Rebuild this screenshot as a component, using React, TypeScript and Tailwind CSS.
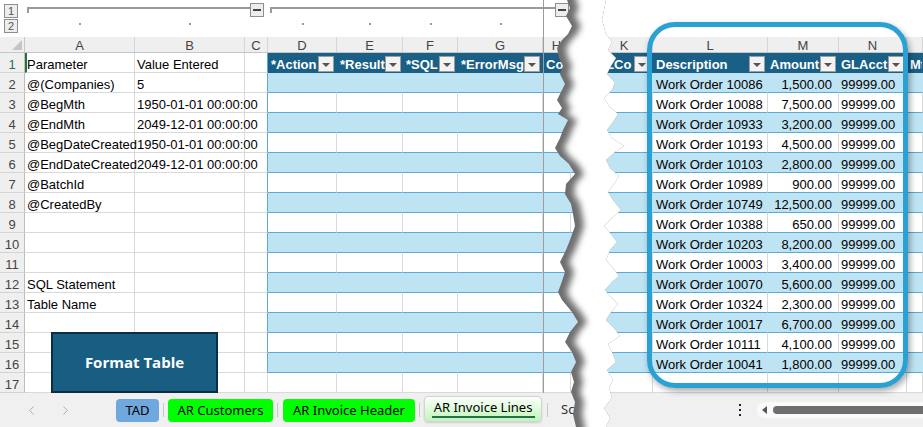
import React from 'react';
import { ChevronLeft, ChevronRight } from 'lucide-react';

const cx = (...c: (string | false | undefined)[]) => c.filter(Boolean).join(' ');

type Col = { key: string; w: string; letter: string; dot?: boolean };

const leftCols: Col[] = [
  { key: 'A', w: 'w-[110px]', letter: 'A', dot: true },
  { key: 'B', w: 'w-[110px]', letter: 'B', dot: true },
  { key: 'C', w: 'w-[23px]', letter: 'C' },
  { key: 'D', w: 'w-[69px]', letter: 'D', dot: true },
  { key: 'E', w: 'w-[66px]', letter: 'E', dot: true },
  { key: 'F', w: 'w-[55px]', letter: 'F', dot: true },
  { key: 'G', w: 'w-[85px]', letter: 'G', dot: true },
  { key: 'H', w: 'w-[28px]', letter: 'H' },
  { key: 'I', w: 'w-[25px]', letter: '' },
];

const rightCols: Col[] = [
  { key: 'K', w: 'w-[57px]', letter: 'K' },
  { key: 'L', w: 'w-[115px]', letter: 'L' },
  { key: 'M', w: 'w-[71px]', letter: 'M' },
  { key: 'N', w: 'w-[68px]', letter: 'N' },
  { key: 'O', w: 'w-[16px]', letter: '' },
];

const params: Record<number, [string, string]> = {
  1: ['Parameter', 'Value Entered'],
  2: ['@(Companies)', '5'],
  3: ['@BegMth', '1950-01-01 00:00:00'],
  4: ['@EndMth', '2049-12-01 00:00:00'],
  5: ['@BegDateCreated', '1950-01-01 00:00:00'],
  6: ['@EndDateCreated', '2049-12-01 00:00:00'],
  7: ['@BatchId', ''],
  8: ['@CreatedBy', ''],
  12: ['SQL Statement', ''],
  13: ['Table Name', ''],
};

const lines: [string, string][] = [
  ['10086', '1,500.00'],
  ['10088', '7,500.00'],
  ['10933', '3,200.00'],
  ['10193', '4,500.00'],
  ['10103', '2,800.00'],
  ['10989', '900.00'],
  ['10749', '12,500.00'],
  ['10388', '650.00'],
  ['10203', '8,200.00'],
  ['10003', '3,400.00'],
  ['10070', '5,600.00'],
  ['10324', '2,300.00'],
  ['10017', '6,700.00'],
  ['10111', '4,100.00'],
  ['10041', '1,800.00'],
];

const rowNums = Array.from({ length: 17 }, (_, i) => i + 1);

function Drop() {
  return (
    <span className="ml-auto mr-[2px] flex h-[16px] w-[16px] shrink-0 items-center justify-center border border-[#9c9c9c] bg-[#f3f3f3]">
      <span className="mt-[1px] h-0 w-0 border-x-[4px] border-t-[4px] border-x-transparent border-t-[#555]" />
    </span>
  );
}

function tableTone(r: number): string {
  if (r === 1) return 'bg-[#1a5f86] border-r-[#1a5f86] border-b-[#1a5f86] text-white font-bold';
  if (r % 2 === 0) return 'bg-[#bee3f3] border-r-[#bee3f3] border-b-[#5aa9d8]';
  return 'bg-white border-r-[#d9d9d9] border-b-[#5aa9d8]';
}

const cellBase = 'flex h-full shrink-0 items-center whitespace-nowrap border-r border-b pt-[3px] leading-[19px]';

function LevelBtn({ n }: { n: string }) {
  return (
    <div className="flex h-[14px] w-[14px] items-center justify-center border border-[#8e8e8e] bg-[#ededed] text-[11px] leading-none text-[#555]">
      {n}
    </div>
  );
}

function Bracket({ w, pr }: { w: string; pr: string }) {
  return (
    <div className={cx('flex items-start pl-[2px]', w, pr)}>
      <div className="mt-[7px] h-[6px] w-[2px] bg-[#9a9a9a]" />
      <div className="mt-[7px] h-[2px] flex-1 bg-[#9a9a9a]" />
      <div className="mt-[3px] flex h-[14px] w-[14px] items-center justify-center border border-[#8e8e8e] bg-[#ededed]">
        <div className="h-[2px] w-[8px] bg-[#444]" />
      </div>
    </div>
  );
}

function OutlineBar() {
  return (
    <div className="flex h-[37px]">
      <div className="flex w-[25px] shrink-0 flex-col items-start gap-[1px] pl-[4px] pt-[4px]">
        <LevelBtn n="1" />
        <LevelBtn n="2" />
      </div>
      <div className="flex flex-1 flex-col">
        <div className="flex h-[18px] items-start">
          <Bracket w="w-[243px]" pr="pr-[4px]" />
          <Bracket w="w-[303px]" pr="pr-[2px]" />
        </div>
        <div className="flex h-[19px]">
          {leftCols.map((c) => (
            <div key={c.key} className={cx('flex shrink-0 justify-center pt-[5px]', c.w)}>
              {c.dot && <div className="h-[2px] w-[2px] bg-[#9a9a9a]" />}
            </div>
          ))}
        </div>
      </div>
    </div>
  );
}

function LetterRow({ cols, corner }: { cols: Col[]; corner?: boolean }) {
  return (
    <div className="flex h-[16px] border-b border-[#c6c6c6] bg-[#efefef] text-[13px] leading-[15px] text-[#444]">
      {corner && (
        <div className="relative w-[25px] shrink-0 border-r border-[#c6c6c6]">
          <svg className="absolute left-0 top-0" width="24" height="15" viewBox="0 0 24 15">
            <polygon points="22,3 22,13 12,13" fill="#c4c4c4" />
          </svg>
        </div>
      )}
      {cols.map((c) => (
        <div key={c.key} className={cx('shrink-0 border-r border-[#d5d5d5] pt-px text-center', c.w)}>
          {c.letter}
        </div>
      ))}
    </div>
  );
}

const leftHeads: Record<string, string> = { D: '*Action', E: '*Result', F: '*SQL', G: '*ErrorMsg', H: 'Co', I: '' };

function LeftRow({ r }: { r: number }) {
  const p = params[r];
  return (
    <div className="flex h-[20px]">
      <div
        className={cx(
          'flex w-[25px] shrink-0 items-center justify-center border-r border-b border-r-[#bdbdbd] border-b-[#d4d4d4] bg-[#efefef] pt-[3px] text-[13px] leading-[19px]',
          r === 1 ? 'text-[#217346]' : 'text-[#444]'
        )}
      >
        {r}
      </div>
      {leftCols.map((c) => {
        const inTable = r <= 16 && ['D', 'E', 'F', 'G', 'H', 'I'].includes(c.key);
        let tone = 'border-r-[#d9d9d9] border-b-[#d9d9d9]';
        if (inTable) tone = tableTone(r);
        else if (c.key === 'C' && r <= 16) tone = 'border-r-[#5aa9d8] border-b-[#d9d9d9]';
        let content: React.ReactNode = null;
        let pad = 'pl-[2px] overflow-hidden';
        if (c.key === 'A' && p) content = p[0];
        if (c.key === 'B' && p) content = p[1];
        // text in A and B spills into the empty cells to its right
        if (c.key === 'A' || c.key === 'B') pad = 'pl-[2px] overflow-visible';
        if (c.key === 'A' && r === 1) pad = 'border-l-2 border-l-[#217346] pl-0';
        if (inTable && r === 1) {
          pad = 'pl-[3px] overflow-hidden';
          content = (
            <>
              <span>{leftHeads[c.key]}</span>
              {['D', 'E', 'F', 'G'].includes(c.key) && <Drop />}
            </>
          );
        }
        return (
          <div key={c.key} className={cx(cellBase, c.w, tone, pad)}>
            {content}
          </div>
        );
      })}
    </div>
  );
}

function TabDivider({ cls }: { cls: string }) {
  return <div className={cx('h-[14px] w-px shrink-0 self-center bg-[#c8c8c8]', cls)} />;
}

function LeftTabs() {
  return (
    <div className="flex h-[34px] items-start bg-[#f0f0f0] font-['Noto_Sans',sans-serif] text-[13px] text-black">
      <div className="flex h-full w-[116px] shrink-0 items-center gap-[19px] pl-[24px] text-[#a8a8a8]">
        <ChevronLeft size={15} strokeWidth={1.5} />
        <ChevronRight size={15} strokeWidth={1.5} />
      </div>
      <div className="mt-[6px] flex h-[23px] w-[43px] shrink-0 items-center justify-center rounded-[4px] bg-[#6fa8dc]">TAD</div>
      <TabDivider cls="ml-[4px] mr-[4px]" />
      <div className="mt-[6px] flex h-[23px] w-[105px] shrink-0 items-center justify-center rounded-[4px] bg-[#00ff00]">AR Customers</div>
      <TabDivider cls="ml-[4px] mr-[5px]" />
      <div className="mt-[6px] flex h-[23px] w-[132px] shrink-0 items-center justify-center rounded-[4px] bg-[#00ff00]">AR Invoice Header</div>
      <TabDivider cls="ml-[4px] mr-[4px]" />
      <div className="mt-[3px] flex h-[26px] w-[118px] shrink-0 flex-col items-center rounded-[4px] border border-[#d4d4d4] bg-linear-to-b from-[#fbfffa] to-[#bff5b8] pt-[2px] shadow-[0_1px_2px_rgba(0,0,0,0.15)]">
        <span className="leading-[16px]">AR Invoice Lines</span>
        <div className="mt-[1px] h-[2px] w-[103px] bg-[#217346]" />
      </div>
      <TabDivider cls="ml-[5px] mr-[13px]" />
      <div className="flex h-full items-center whitespace-nowrap text-[#333]">Sc</div>
    </div>
  );
}

function LeftSheet() {
  return (
    <div className="flex w-[596px] shrink-0 flex-col overflow-hidden">
      <OutlineBar />
      <LetterRow cols={leftCols} corner />
      {rowNums.map((r) => (
        <LeftRow key={r} r={r} />
      ))}
      <LeftTabs />
    </div>
  );
}

const rightHeads: Record<string, { t: string; pad: string; drop: boolean }> = {
  K: { t: 'GLCo', pad: 'pl-0', drop: true },
  L: { t: 'Description', pad: 'pl-[3px]', drop: true },
  M: { t: 'Amount', pad: 'pl-[2px]', drop: true },
  N: { t: 'GLAcct', pad: 'pl-[2px]', drop: true },
  O: { t: 'Mt', pad: 'pl-[3px]', drop: false },
};

function RightRow({ r }: { r: number }) {
  const line = r >= 2 && r <= 16 ? lines[r - 2] : null;
  return (
    <div className="flex h-[20px]">
      {rightCols.map((c) => {
        const tone = r <= 16 ? tableTone(r) : 'border-r-[#d9d9d9] border-b-[#d9d9d9]';
        let content: React.ReactNode = null;
        let pad = 'pl-[3px]';
        if (r === 1) {
          const h = rightHeads[c.key];
          pad = h.pad;
          content = (
            <>
              <span>{h.t}</span>
              {h.drop && <Drop />}
            </>
          );
        } else if (line) {
          if (c.key === 'L') content = `Work Order ${line[0]}`;
          if (c.key === 'M') {
            content = line[1];
            pad = 'justify-end pr-[6px]';
          }
          if (c.key === 'N') {
            content = '99999.00';
            pad = 'pl-[2px]';
          }
        }
        return (
          <div key={c.key} className={cx(cellBase, 'overflow-hidden', c.w, tone, pad)}>
            {content}
          </div>
        );
      })}
    </div>
  );
}

function RightTabs() {
  return (
    <div className="flex h-[34px] items-center bg-[#f0f0f0] pl-[143px]">
      <div className="flex flex-col gap-[3px]">
        <div className="h-[2px] w-[2px] bg-[#222]" />
        <div className="h-[2px] w-[2px] bg-[#222]" />
        <div className="h-[2px] w-[2px] bg-[#222]" />
      </div>
      <div className="ml-[16px] flex h-[16px] w-[190px] shrink-0 items-center rounded-full bg-[#fafafa]">
        <div className="ml-[5px] h-0 w-0 border-y-[4px] border-r-[5px] border-y-transparent border-r-[#555]" />
        <div className="ml-[6px] h-[8px] flex-1 rounded-full bg-[#6e6e6e]" />
      </div>
    </div>
  );
}

function RightSheet() {
  return (
    <div className="flex min-w-0 flex-1 flex-col overflow-hidden">
      <div className="h-[37px]" />
      <LetterRow cols={rightCols} />
      {rowNums.map((r) => (
        <RightRow key={r} r={r} />
      ))}
      <RightTabs />
    </div>
  );
}

// jagged edge of the torn gap between the two sheet pieces
const tearLeft: [number, number][] = [
  [567, -10], [567, 0], [570, 8], [566, 16], [572, 26], [568, 34], [562, 40], [557, 48], [559, 58], [563, 66],
  [560, 74], [565, 84], [561, 92], [557, 100], [562, 108], [558, 114], [568, 120], [563, 130], [560, 138],
  [555, 148], [560, 156], [569, 164], [575, 174], [566, 184], [565, 194], [571, 204], [573, 214], [575, 226],
  [570, 240], [566, 250], [560, 262], [565, 272], [561, 284], [558, 292], [562, 300], [572, 312], [578, 322],
  [570, 332], [565, 342], [572, 352], [576, 362], [571, 372], [574, 382], [571, 392], [575, 402], [573, 414],
  [576, 427], [576, 437],
];
const tearRight: [number, number][] = [
  [606, 437], [606, 427], [610, 418], [604, 408], [612, 398], [609, 388], [613, 380], [607, 370], [616, 362],
  [612, 352], [608, 344], [620, 336], [614, 328], [606, 320], [611, 312], [618, 304], [610, 296], [605, 290],
  [612, 282], [619, 276], [613, 268], [606, 260], [610, 250], [617, 242], [611, 234], [604, 226], [612, 218],
  [621, 210], [613, 200], [608, 192], [614, 184], [619, 176], [610, 168], [606, 160], [615, 152], [624, 146],
  [612, 138], [607, 130], [613, 122], [618, 114], [609, 106], [604, 98], [612, 90], [615, 82], [607, 74],
  [611, 66], [616, 58], [608, 50], [612, 42], [606, 34], [602, 20], [606, 0], [606, -10],
];

function Tear() {
  const pts = [...tearLeft, ...tearRight].map(([x, y]) => `${x},${y}`).join(' ');
  const inner = [...tearLeft.map(([x, y]) => [x + 9, y]), ...tearRight.map(([x, y]) => [x + 30, y])]
    .map(([x, y]) => `${x},${y}`)
    .join(' ');
  return (
    <svg className="pointer-events-none absolute left-0 top-0" width={923} height={427} viewBox="0 0 923 427">
      <defs>
        <clipPath id="tear-gap">
          <polygon points={pts} />
        </clipPath>
        <filter id="tear-soft" x="-50%" y="-10%" width="200%" height="120%">
          <feGaussianBlur stdDeviation="3" />
        </filter>
      </defs>
      <g clipPath="url(#tear-gap)">
        <rect x="540" y="-10" width="110" height="450" fill="#6e6e6e" />
        <polygon points={inner} fill="#ffffff" filter="url(#tear-soft)" />
      </g>
    </svg>
  );
}

export default function App() {
  return (
    <div className="relative h-[427px] w-[923px] overflow-hidden bg-white font-['Liberation_Sans',Arial,sans-serif] text-[13px] text-black">
      <div className="flex h-full">
        <LeftSheet />
        <RightSheet />
      </div>
      {/* frozen-pane split line */}
      <div className="absolute left-[543px] top-0 h-[393px] w-px bg-[#9d9d9d]" />
      <div className="absolute left-[51px] top-[332px] flex h-[61px] w-[167px] items-center justify-center border-2 border-[#0d2e40] bg-[#175e82] font-['Open_Sans',sans-serif] text-[15px] font-bold text-white">
        Format Table
      </div>
      <div className="pointer-events-none absolute left-[647px] top-[22px] h-[366px] w-[261px] rounded-[28px] border-[5px] border-[#2aa0d3] shadow-[2px_3px_6px_rgba(0,0,0,0.35)]" />
      <Tear />
    </div>
  );
}
